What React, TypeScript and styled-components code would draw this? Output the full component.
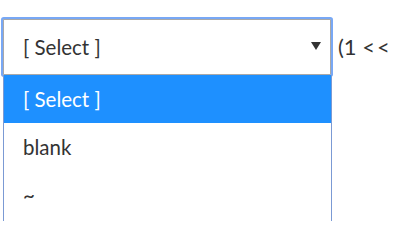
import React from 'react';
import styled, { createGlobalStyle } from 'styled-components';

const GlobalStyle = createGlobalStyle`
  html, body {
    margin: 0;
    padding: 0;
    background: #ffffff;
  }
  body {
    font-family: Lato, "Liberation Sans", sans-serif;
    color: #333333;
  }
`;

const Row = styled.div`
  display: flex;
  align-items: flex-start;
  padding: 19px 0 0 3px;
`;

const SelectWrap = styled.div`
  display: flex;
  flex-direction: column;
  width: 328px;
`;

const SelectBox = styled.div`
  box-sizing: border-box;
  display: flex;
  align-items: center;
  justify-content: space-between;
  height: 56px;
  padding: 0 9px 0 19px;
  border: 1px solid #a9a9a9;
  box-shadow: 0 0 0 2px #78a8f5;
  border-radius: 1px;
  background: #fff;
  font-size: 20.5px;
  color: #333;
`;

const Arrow = styled.svg`
  width: 10px;
  height: 8px;
  margin-top: -2px;
`;

const List = styled.ul`
  width: 329px;
  box-sizing: border-box;
  margin: 0;
  padding: 0;
  list-style: none;
  height: 146px;
  overflow: hidden;
  background: #fff;
  border: 1px solid #7b9ad4;
  border-top: none;
  border-bottom: none;
`;

const Option = styled.li<{ $active?: boolean }>`
  height: 48px;
  display: flex;
  align-items: center;
  padding-left: 19px;
  font-size: 20.5px;
  background: ${(p) => (p.$active ? '#1e90ff' : '#fff')};
  color: ${(p) => (p.$active ? '#fff' : '#333')};
`;

const Trailing = styled.span`
  margin-left: 7px;
  line-height: 56px;
  font-size: 22px;
  color: #333;
  white-space: nowrap;
`;

const Shift = styled.span`
  letter-spacing: 2px;
`;

const options = ['[ Select ]', 'blank', '~'];

const App = () => {
  return (
    <>
      <GlobalStyle />
      <Row>
        <SelectWrap>
          <SelectBox>
            <span>[ Select ]</span>
            <Arrow viewBox="0 0 10 8">
              <path d="M0 0 L10 0 L5 8 Z" fill="#333" />
            </Arrow>
          </SelectBox>
          <List>
            {options.map((o, i) => (
              <Option key={i} $active={i === 0}>
                {o}
              </Option>
            ))}
          </List>
        </SelectWrap>
        <Trailing>
          (1 <Shift>&lt;&lt;</Shift>
        </Trailing>
      </Row>
    </>
  );
};

export default App;
